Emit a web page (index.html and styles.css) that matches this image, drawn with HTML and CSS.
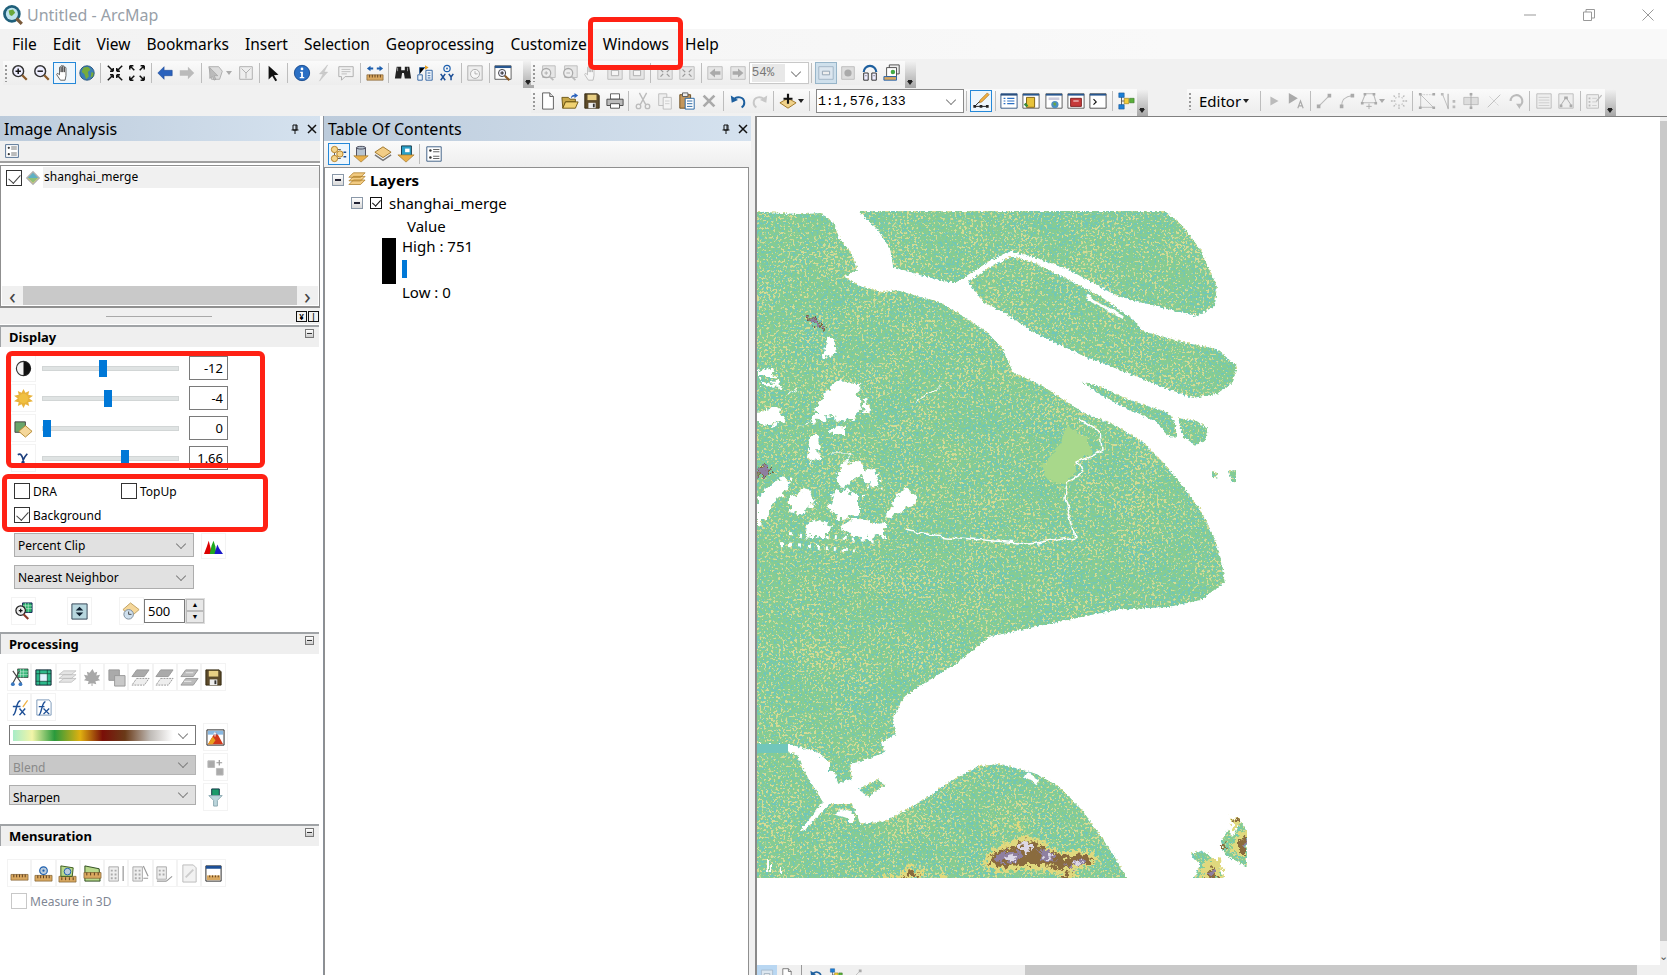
FILE: index.html
```html
<!DOCTYPE html>
<html lang="en">
<head>
<meta charset="utf-8">
<title>Untitled - ArcMap</title>
<link rel="stylesheet" href="styles.css">
</head>
<body>
<svg class="defs" width="0" height="0" aria-hidden="true">
<defs>
<symbol id="logo" viewBox="0 0 20 20"><circle cx="9" cy="9" r="8" fill="#1f5f7a"/><circle cx="9" cy="9" r="5.500" fill="#bfe3ee"/><path d="M6 6l4-1 2 3-3 3-2-1z" fill="#6aa83c"/><path d="M13 13l5 5" stroke="#7a5a3a" stroke-width="3"/></symbol>
<symbol id="zin" viewBox="0 0 20 20"><circle cx="8" cy="8" r="6" fill="#eef" stroke="#333" stroke-width="1.600"/><path d="M5 8h6M8 5v6" stroke="#111" stroke-width="1.600"/><path d="M12.500 12.500l5 5" stroke="#8a5a2a" stroke-width="2.600"/></symbol>
<symbol id="zout" viewBox="0 0 20 20"><circle cx="8" cy="8" r="6" fill="#eef" stroke="#333" stroke-width="1.600"/><path d="M5 8h6" stroke="#111" stroke-width="1.600"/><path d="M12.500 12.500l5 5" stroke="#8a5a2a" stroke-width="2.600"/></symbol>
<symbol id="hand" viewBox="0 0 20 20"><path d="M6 18l-4-6c-.6-1.200 1-2 1.800-1L5 12V4c0-1.200 1.800-1.200 1.800 0v5-6.500c0-1.200 1.800-1.200 1.800 0V9 3c0-1.200 1.800-1.200 1.800 0v6-4.500c0-1.200 1.800-1.200 1.800 0V13l-1 5z" fill="#fff" stroke="#444" stroke-width=".9"/></symbol>
<symbol id="globe" viewBox="0 0 20 20"><circle cx="10" cy="10" r="8" fill="#3c7fb8"/><path d="M6 4l5-1 3 3-3 3 1 5-3 3-2-6-3-2zM15 9l3 1-1 4-3 1z" fill="#77ab3c"/><circle cx="10" cy="10" r="8" fill="none" stroke="#24527a"/></symbol>
<symbol id="fin" viewBox="0 0 20 20"><path d="M2 2l5 5M8 8H4.500M8 8V4.500M18 2l-5 5M12 8h3.500M12 8V4.500M2 18l5-5M8 12H4.500M8 12v3.500M18 18l-5-5M12 12h3.500M12 12v3.500" stroke="#111" stroke-width="1.700" fill="none"/></symbol>
<symbol id="fout" viewBox="0 0 20 20"><path d="M7 7L2 2M2 2h4M2 2v4M13 7l5-5M18 2h-4M18 2v4M7 13l-5 5M2 18h4M2 18v-4M13 13l5 5M18 18h-4M18 18v-4" stroke="#111" stroke-width="1.700" fill="none"/></symbol>
<symbol id="back" viewBox="0 0 20 20"><path d="M2 10l7-7v4h9v6H9v4z" fill="#2a62bd" stroke="#1a4590" stroke-width=".6"/></symbol>
<symbol id="fwd" viewBox="0 0 20 20"><path d="M18 10l-7-7v4H2v6h9v4z" fill="#bbb"/></symbol>
<symbol id="sel" viewBox="0 0 20 20"><path d="M2 3h11l4 5-3 9H5z" fill="#ddd" stroke="#aaa"/><path d="M3 4l9 9-4 0 2 4-2 1-2-4-3 2z" fill="#bbb" stroke="#999" stroke-width=".6"/></symbol>
<symbol id="clr" viewBox="0 0 20 20"><path d="M3 3h14v14H3z" fill="#eee" stroke="#aaa"/><path d="M5 5l5 5 5-5M10 10v6" stroke="#aaa" fill="none"/></symbol>
<symbol id="ptr" viewBox="0 0 20 20"><path d="M4 2l11 10-5 .5 3.500 5.500-2 1.300-3.500-6-4 4z" fill="#111"/></symbol>
<symbol id="info" viewBox="0 0 20 20"><circle cx="10" cy="10" r="8.500" fill="#2a6fc4" stroke="#174a8c"/><circle cx="10" cy="5.500" r="1.500" fill="#fff"/><path d="M8 8.500h3v6h1.500v1.300h-5v-1.300H9V10H8z" fill="#fff"/></symbol>
<symbol id="bolt" viewBox="0 0 20 20"><path d="M14 1L5 11h4l-4 8 9-10h-4z" fill="#ccc" stroke="#bbb" stroke-width=".5"/></symbol>
<symbol id="note" viewBox="0 0 20 20"><path d="M2 3h16v11H9l-4 4v-4H2z" fill="#f2f2f2" stroke="#aaa"/><path d="M5 6h10M5 8.500h10M5 11h6" stroke="#bbb"/></symbol>
<symbol id="meas" viewBox="0 0 20 20"><path d="M1 12h18v6H1z" fill="#d9a860" stroke="#7a5a2a" stroke-width=".7"/><path d="M4 12v3M7 12v3M10 12v3M13 12v3M16 12v3" stroke="#5a3a1a"/><path d="M1 5l4-3v2h3v2H5v2zM19 5l-4-3v2h-3v2h3v2z" fill="#1d5fae"/></symbol>
<symbol id="bino" viewBox="0 0 20 20"><path d="M3 3h5v4h4V3h5l2 13h-7l-1-6H9l-1 6H1z" fill="#222"/><path d="M4 4v4M15 4v4" stroke="#999"/></symbol>
<symbol id="route" viewBox="0 0 20 20"><path d="M2 12h5v6H2zM11 7h7v11h-7z" fill="#eef4fb" stroke="#2a5f9e"/><path d="M4 11V4h6M13 10h3M13 13h3M13 15.500h3" stroke="#2a5f9e"/><path d="M10 1.500l4 2.500-4 2.500z" fill="#e8a020"/></symbol>
<symbol id="xy" viewBox="0 0 20 20"><circle cx="10" cy="5" r="3.500" fill="none" stroke="#1d5fae" stroke-width="1.300"/><circle cx="10" cy="5" r="1" fill="#1d5fae"/><path d="M3 11l5 7M8 11l-5 7M12 11l2.500 3.500L17 11M14.500 14.500V18" stroke="#1d4f96" stroke-width="1.700" fill="none"/></symbol>
<symbol id="time" viewBox="0 0 20 20"><path d="M2 2h16v16H2z" fill="#eee" stroke="#aaa"/><circle cx="10" cy="11" r="5" fill="#f7f7f7" stroke="#aaa"/><path d="M10 8v3h3" stroke="#aaa" fill="none"/></symbol>
<symbol id="view" viewBox="0 0 20 20"><path d="M1 2h18v15H1z" fill="#fff" stroke="#555"/><path d="M1 2h18v2.500H1z" fill="#27568f"/><circle cx="9" cy="10" r="4" fill="#eef" stroke="#333"/><path d="M7 10h4M9 8v4" stroke="#111"/><path d="M12 13l5 5" stroke="#8a5a2a" stroke-width="2.400"/></symbol>
<symbol id="gz1" viewBox="0 0 20 20"><path d="M4 2h14v13H4z" fill="#e6e6e6" stroke="#bbb"/><circle cx="8" cy="10" r="5" fill="#eee" stroke="#aaa" stroke-width="1.400"/><path d="M6 10h4M8 8v4" stroke="#aaa"/><path d="M12 14l4 4" stroke="#bbb" stroke-width="2"/></symbol>
<symbol id="gz2" viewBox="0 0 20 20"><path d="M4 2h14v13H4z" fill="#e6e6e6" stroke="#bbb"/><circle cx="8" cy="10" r="5" fill="#eee" stroke="#aaa" stroke-width="1.400"/><path d="M6 10h4" stroke="#aaa"/><path d="M12 14l4 4" stroke="#bbb" stroke-width="2"/></symbol>
<symbol id="gbox" viewBox="0 0 20 20"><path d="M2 3h16v14H2z" fill="#e6e6e6" stroke="#bbb"/><path d="M6 7h8v6H6z" fill="#f4f4f4" stroke="#aaa"/></symbol>
<symbol id="gboxs" viewBox="0 0 20 20"><path d="M2 3h16v14H2z" fill="#e6e6e6" stroke="#bbb"/><path d="M5 6l3 3M15 6l-3 3M5 14l3-3M15 14l-3-3" stroke="#999" stroke-width="1.400"/></symbol>
<symbol id="gleft" viewBox="0 0 20 20"><path d="M2 3h16v14H2z" fill="#e6e6e6" stroke="#bbb"/><path d="M4 10l6-5v3h6v4h-6v3z" fill="#aaa"/></symbol>
<symbol id="gright" viewBox="0 0 20 20"><path d="M2 3h16v14H2z" fill="#e6e6e6" stroke="#bbb"/><path d="M16 10l-6-5v3H4v4h6v3z" fill="#aaa"/></symbol>
<symbol id="page" viewBox="0 0 20 20"><path d="M2 3h16v14H2z" fill="#dce6ef" stroke="#9fb2c4"/><path d="M6 8h8v4H6z" fill="#eee" stroke="#8ea0b0"/></symbol>
<symbol id="gstar" viewBox="0 0 20 20"><path d="M3 3h14v14H3z" fill="#ddd" stroke="#bbb"/><circle cx="10" cy="10" r="4" fill="#aaa"/></symbol>
<symbol id="refr" viewBox="0 0 20 20"><path d="M3 9a7 7 0 0 1 14 0" stroke="#1d5f9e" stroke-width="2.400" fill="none"/><path d="M3 10h5v8H3zM12 10h5v8h-5z" fill="#eef" stroke="#222"/><path d="M5 13h1M14 13h1" stroke="#222"/></symbol>
<symbol id="wins" viewBox="0 0 20 20"><path d="M7 1h11v10H7z" fill="#eee" stroke="#444"/><path d="M4 4h11v10H4z" fill="#fff" stroke="#444"/><circle cx="11" cy="9" r="2.500" fill="#4a4"/><path d="M1 14h14v4H1z" fill="#d9a860" stroke="#1d5fae"/></symbol>
<symbol id="newd" viewBox="0 0 20 20"><path d="M4 1h8l4 4v14H4z" fill="#fff" stroke="#555"/><path d="M12 1v4h4" fill="#ddd" stroke="#555"/></symbol>
<symbol id="open" viewBox="0 0 20 20"><path d="M1 6h7l2 2h6v3H5l-3 7z" fill="#c9a94a" stroke="#6a5210"/><path d="M5 11h14l-3 7H2z" fill="#f0d272" stroke="#6a5210"/><path d="M11 7c0-3 2-4 4-4V1l4 3-4 3V5c-2 0-3 1-4 2z" fill="#2a62bd"/></symbol>
<symbol id="save" viewBox="0 0 20 20"><path d="M2 2h14l2 2v14H2z" fill="#5c4a2a" stroke="#33280f"/><path d="M5 3h10v6H5z" fill="#e8cf84"/><path d="M6 12h8v6H6z" fill="#eee"/><path d="M11 13h2v4h-2z" fill="#333"/></symbol>
<symbol id="prnt" viewBox="0 0 20 20"><path d="M5 2h10v6H5z" fill="#fff" stroke="#555"/><path d="M1 8h18v7H1z" fill="#bbb" stroke="#444"/><path d="M5 13h10v5H5z" fill="#fff" stroke="#444"/></symbol>
<symbol id="cut" viewBox="0 0 20 20"><path d="M6 1l7 13M14 1L7 14" stroke="#bbb" stroke-width="1.500"/><circle cx="5" cy="16" r="2.500" fill="none" stroke="#bbb" stroke-width="1.500"/><circle cx="15" cy="16" r="2.500" fill="none" stroke="#bbb" stroke-width="1.500"/></symbol>
<symbol id="copy" viewBox="0 0 20 20"><path d="M3 2h9v13H3z" fill="#eee" stroke="#bbb"/><path d="M8 6h9v13H8z" fill="#f4f4f4" stroke="#bbb"/><path d="M10 10h5M10 13h5" stroke="#ccc"/></symbol>
<symbol id="past" viewBox="0 0 20 20"><path d="M2 3h12v15H2z" fill="#c4975c" stroke="#6a4a1a"/><path d="M5 1h6v4H5z" fill="#eee" stroke="#555"/><path d="M8 7h10v12H8z" fill="#fff" stroke="#1d5f9e"/><path d="M10 10h6M10 13h6M10 16h6" stroke="#1d5f9e"/></symbol>
<symbol id="del" viewBox="0 0 20 20"><path d="M4 4l12 12M16 4L4 16" stroke="#aaa" stroke-width="3"/></symbol>
<symbol id="undo" viewBox="0 0 20 20"><path d="M5 9c3-5 12-4 12 3 0 2-1 4-3 5" fill="none" stroke="#1d5f9e" stroke-width="2.200"/><path d="M2 4l1 8 7-3z" fill="#1d5f9e"/></symbol>
<symbol id="redo" viewBox="0 0 20 20"><path d="M15 9c-3-5-12-4-12 3 0 2 1 4 3 5" fill="none" stroke="#c8c8c8" stroke-width="2.200"/><path d="M18 4l-1 8-7-3z" fill="#c8c8c8"/></symbol>
<symbol id="add" viewBox="0 0 20 20"><path d="M10 7l9 5-9 6-9-6z" fill="#f0d28a" stroke="#9a6f20"/><path d="M10 2v11M5 7.500h10" stroke="#111" stroke-width="2.400"/></symbol>
<symbol id="edit" viewBox="0 0 20 20"><path d="M3 16h14M3 16l7-7" stroke="#111"/><path d="M1.500 14.500h3v3h-3zM8.500 14.500h3v3h-3zM15.500 14.500h3v3h-3z" fill="#222"/><path d="M9 9l8-8 2 2-8 8-3 1z" fill="#f2b040" stroke="#8a5a1a" stroke-width=".6"/></symbol>
<symbol id="toc" viewBox="0 0 20 20"><path d="M1 2h18v16H1z" fill="#fff" stroke="#2a4f7f"/><path d="M1 2h18v2H1z" fill="#2a4f7f"/><path d="M4 7h2M8 7h8M4 10h2M8 10h8M4 13h2M8 13h8" stroke="#2a6fc4" stroke-width="1.300"/></symbol>
<symbol id="catl" viewBox="0 0 20 20"><path d="M1 2h18v16H1z" fill="#fff" stroke="#555"/><path d="M1 2h18v2H1z" fill="#27568f"/><path d="M5 6h9v11H5z" fill="#e8c33a" stroke="#7a5a0a"/><path d="M2 14l3 3 2-2-3-3z" fill="#3a8a3a"/></symbol>
<symbol id="srch" viewBox="0 0 20 20"><path d="M1 2h18v16H1z" fill="#fff" stroke="#555"/><path d="M1 2h18v2H1z" fill="#27568f"/><path d="M4 6h12v3H4z" fill="#ccd"/><circle cx="11" cy="14" r="4" fill="#4c8fc0"/><path d="M9 12h3v3h-2z" fill="#6aa83c"/></symbol>
<symbol id="tbox" viewBox="0 0 20 20"><path d="M1 2h18v16H1z" fill="#fff" stroke="#555"/><path d="M1 2h18v2H1z" fill="#27568f"/><path d="M4 7h12v9H4z" fill="#c63a3a" stroke="#7a1a1a"/><path d="M7 10h6" stroke="#fff"/></symbol>
<symbol id="pyth" viewBox="0 0 20 20"><path d="M1 2h18v16H1z" fill="#fff" stroke="#444"/><path d="M1 2h18v2H1z" fill="#27568f"/><path d="M5 8l3 3-3 3" stroke="#111" fill="none" stroke-width="1.300"/></symbol>
<symbol id="graph" viewBox="0 0 20 20"><path d="M5 5v10M5 10h6" stroke="#555"/><path d="M2 1h6v5H2zM2 14h6v5H2z" fill="#1d7fd6" stroke="#134f8c" stroke-width=".6"/><path d="M8 7h5v6H8z" fill="#f2cf3a" stroke="#8a6a0a" stroke-width=".6"/><path d="M14 7h5v5h-5z" fill="#5ab03a" stroke="#2a6a1a" stroke-width=".6"/></symbol>
<symbol id="e1" viewBox="0 0 20 20"><path d="M6 5l9 5-9 5z" fill="#bbb"/></symbol>
<symbol id="e2" viewBox="0 0 20 20"><path d="M2 1l10 6-10 6z" fill="#aaa"/><path d="M12 18l3-8 3 8M13 15.500h4" stroke="#aaa" fill="none" stroke-width="1.300"/></symbol>
<symbol id="e3" viewBox="0 0 20 20"><path d="M4 16L16 4" stroke="#bbb" stroke-width="1.200"/><path d="M2 14h4v4H2zM14 2h4v4h-4z" fill="#aaa"/></symbol>
<symbol id="e4" viewBox="0 0 20 20"><path d="M4 16C4 8 8 5 16 4" stroke="#bbb" fill="none" stroke-width="1.200"/><path d="M2 14h4v4H2zM14 2h4v4h-4z" fill="#aaa"/></symbol>
<symbol id="e5" viewBox="0 0 20 20"><path d="M6 2h9l3 10H2z" fill="none" stroke="#bbb" stroke-width="1.200"/><path d="M4 1h3v3H4zM14 1h3v3h-3zM1 11h3v3H1zM16 11h3v3h-3z" fill="#aaa"/><path d="M10 13v6M7 16h6" stroke="#aaa"/></symbol>
<symbol id="e6" viewBox="0 0 20 20"><path d="M10 1v5M10 14v5M1 10h5M14 10h5M4 4l3 3M16 4l-3 3M4 16l3-3M16 16l-3-3" stroke="#bbb" stroke-width="1.500" stroke-dasharray="2 1"/></symbol>
<symbol id="e7" viewBox="0 0 20 20"><path d="M3 3l14 14M3 3v14h14" stroke="#bbb" fill="none"/><path d="M3 3h14" stroke="#ccc" stroke-dasharray="2 1"/><path d="M1 1h3v3H1zM16 16h3v3h-3zM1 16h3v3H1zM16 1h3v3h-3z" fill="#aaa"/></symbol>
<symbol id="e8" viewBox="0 0 20 20"><path d="M3 3l6 15" stroke="#bbb" fill="none"/><path d="M9 2v17" stroke="#999"/><path d="M1 1h3v3H1zM14 9h3v3h-3zM14 15h3v3h-3z" fill="#bbb"/></symbol>
<symbol id="e9" viewBox="0 0 20 20"><path d="M2 6h16v8H2z" fill="#ddd" stroke="#bbb"/><path d="M10 1v18" stroke="#aaa"/><path d="M8.500 1h3v3h-3zM8.500 16h3v3h-3z" fill="#aaa"/></symbol>
<symbol id="e10" viewBox="0 0 20 20"><path d="M3 17L17 3" stroke="#bbb"/><path d="M5 5l10 10" stroke="#ccc" stroke-dasharray="2 1"/></symbol>
<symbol id="e11" viewBox="0 0 20 20"><path d="M4 10a6.500 6.500 0 1 1 9 6" fill="none" stroke="#bbb" stroke-width="2.400"/><path d="M10 13l6 0-2 6z" fill="#bbb"/></symbol>
<symbol id="e12" viewBox="0 0 20 20"><path d="M2 2h16v16H2z" fill="#eee" stroke="#bbb"/><path d="M4 6h12M4 9h12M4 12h12M4 15h12" stroke="#ccc"/></symbol>
<symbol id="e13" viewBox="0 0 20 20"><path d="M2 2h16v16H2z" fill="#eee" stroke="#bbb"/><path d="M4 15l6-9 6 9" stroke="#aaa" fill="none"/><path d="M8 5h4v3H8zM3 14h3v3H3zM14 14h3v3h-3z" fill="#aaa"/></symbol>
<symbol id="e14" viewBox="0 0 20 20"><path d="M2 3h13v15H2z" fill="#eee" stroke="#bbb"/><path d="M4 6h2v2H4zM4 10h2v2H4zM4 14h2v2H4z" fill="#bbb"/><path d="M8 7h5M8 11h5M8 15h5" stroke="#ccc"/><path d="M12 10l6-7 1 1-6 7z" fill="#bbb"/></symbol>
<symbol id="tree" viewBox="0 0 20 20"><path d="M8 5h4M8 15h4M5 8v4" stroke="#555"/><circle cx="5" cy="5" r="3.500" fill="#f5d58c" stroke="#b07a20"/><circle cx="5" cy="15" r="3.500" fill="#f5d58c" stroke="#b07a20"/><circle cx="11" cy="10" r="3.500" fill="#f5d58c" stroke="#b07a20"/><path d="M15 8h3M15 13h3" stroke="#1d4f96" stroke-width="1.500"/></symbol>
<symbol id="dbd" viewBox="0 0 20 20"><path d="M5 3c0-2 10-2 10 0v10H5z" fill="#b8c4d0" stroke="#445"/><path d="M5 3c0 2 10 2 10 0" fill="none" stroke="#445"/><path d="M2 12h16l-8 7z" fill="#eab04a" stroke="#9a6f20" stroke-width=".7"/></symbol>
<symbol id="lay" viewBox="0 0 20 20"><path d="M10 2l9 6-9 6-9-6z" fill="#f2cd86" stroke="#9a6f20"/><path d="M1 11l9 6 9-6" fill="none" stroke="#777" stroke-width="1.600"/></symbol>
<symbol id="lyd" viewBox="0 0 20 20"><path d="M5 1h11v11H5z" fill="#2aa0c8" stroke="#134"/><path d="M9 4h5v4H9z" fill="#fff"/><path d="M1 11h18l-9 8z" fill="#eab04a" stroke="#9a6f20" stroke-width=".7"/></symbol>
<symbol id="optn" viewBox="0 0 20 20"><path d="M2 2h16v16H2z" fill="#fff" stroke="#33577f"/><circle cx="6" cy="6" r="1.400" fill="#333"/><circle cx="6" cy="14" r="1.400" fill="#333"/><path d="M9 5h7M9 7.500h7M9 12.500h7M9 15h7" stroke="#555"/></symbol>
<symbol id="lyrs" viewBox="0 0 20 20"><path d="M6 2h13l-5 5H1zM6 6h13l-5 5H1zM6 10h13l-5 5H1z" fill="#f2cb82" stroke="#a87820" stroke-width=".8"/></symbol>
<symbol id="rast" viewBox="0 0 20 20"><path d="M10 1l9 9-9 9-9-9z" fill="#b0b0b0"/><path d="M10 3.500l6.500 6.500L10 16.500 3.500 10z" fill="#5fb0c4"/><path d="M3.500 10L10 16.500 16.500 10" fill="#8ec07a" stroke="#e9c878"/></symbol>
<symbol id="cntr" viewBox="0 0 20 20"><circle cx="10" cy="10" r="7.500" fill="#f4f4f4" stroke="#333" stroke-width="1.200"/><path d="M10 2.500a7.500 7.500 0 0 1 0 15z" fill="#111"/></symbol>
<symbol id="sun" viewBox="0 0 20 20"><path d="M10 0l2 4 4-2-1 4 5 1-4 3 4 3-5 1 1 4-4-2-2 4-2-4-4 2 1-4-5-1 4-3-4-3 5-1-1-4 4 2z" fill="#e8b23a"/><circle cx="10" cy="10" r="5" fill="#f0c040"/></symbol>
<symbol id="trans" viewBox="0 0 20 20"><path d="M1 3h11v11H1z" fill="#6aa56a" stroke="#444"/><path d="M12 7l7 6-7 6-7-6z" fill="#f5d79a" stroke="#b58a30"/></symbol>
<symbol id="hist" viewBox="0 0 20 20"><path d="M0 18l3-8 2-6 2 8 1 6z" fill="#d00"/><path d="M6 18l2-9 2-5 2 6 1 8z" fill="#1ea81e"/><path d="M11 18l3-10 2 4 4 6z" fill="#1a1ac8"/></symbol>
<symbol id="zgr" viewBox="0 0 20 20"><path d="M9 1h10v10H9z" fill="#29b36a" stroke="#125"/><path d="M12 1v10M15 1v10M9 4h10M9 7h10" stroke="#d7f5e5" stroke-width=".6"/><circle cx="7" cy="9" r="5" fill="#eee" stroke="#222" stroke-width="1.300"/><path d="M5 9h4M7 7v4" stroke="#111" stroke-width="1.300"/><path d="M10 13l5 5" stroke="#8a3a2a" stroke-width="2.200"/></symbol>
<symbol id="stretch" viewBox="0 0 20 20"><path d="M2 2h16v16H2z" fill="#b8d7df" stroke="#345"/><path d="M6 9h8l-4-4zM6 11h8l-4 4z" fill="#123"/></symbol>
<symbol id="clk" viewBox="0 0 20 20"><path d="M9 1l9 7-8 7-9-7z" fill="#f5d79a" stroke="#c0a060"/><circle cx="7" cy="13" r="5" fill="#cfe0ee" stroke="#7a8a9a"/><path d="M7 10v3h3" stroke="#444" fill="none"/></symbol>
<symbol id="gamma" viewBox="0 0 20 20"><path d="M4 6c3-2 5 1 6 7 1 3 0 5-1 5-1 0-1-3 1-7 1-2 2-4 4-6" fill="none" stroke="#1d3f7e" stroke-width="1.800"/></symbol>
<symbol id="clipg" viewBox="0 0 20 20"><path d="M8 1h11v9H8z" fill="#3bb87c" stroke="#111" stroke-width=".6"/><path d="M11 1v9M14 1v9M8 4h11M8 7h11" stroke="#cfeee0" stroke-width=".6"/><path d="M3 3l9 13M10 3l-7 13" stroke="#444" stroke-width="1.200"/><circle cx="3" cy="17" r="2" fill="#3a78c0"/><circle cx="11" cy="17" r="2" fill="#3a78c0"/></symbol>
<symbol id="mask" viewBox="0 0 20 20"><path d="M2 2h16v16H2z" fill="#2cb88a" stroke="#123"/><path d="M6 6h8v8H6z" fill="#e0f4ff"/><path d="M2 6h16M2 14h16M6 2v16M14 2v16" stroke="#0d3a2c" stroke-width=".7"/></symbol>
<symbol id="stack" viewBox="0 0 20 20"><path d="M6 3h13l-5 4H1zM6 7h13l-5 4H1zM6 11h13l-5 4H1z" fill="#e4e4e4" stroke="#bbb" stroke-width=".8"/></symbol>
<symbol id="leaf" viewBox="0 0 20 20"><path d="M10 1l2 4 3-1-1 4 4-1-2 4 2 2-5 1 1 3-4-1v3H9v-3l-4 1 1-3-5-1 2-2-2-4 4 1-1-4 3 1z" fill="#a8a8a8"/></symbol>
<symbol id="mos" viewBox="0 0 20 20"><path d="M2 2h11v11H2z" fill="#aaa" stroke="#999"/><path d="M8 8h11v11H8z" fill="#c8c8c8" stroke="#999"/></symbol>
<symbol id="dif1" viewBox="0 0 20 20"><path d="M6 2h13l-5 7H1z" fill="#aaa" stroke="#999"/><path d="M6 11h13l-5 7H1z" fill="#eee" stroke="#999" stroke-dasharray="2 1"/></symbol>
<symbol id="dif2" viewBox="0 0 20 20"><path d="M6 2h13l-5 7H1z" fill="#bbb" stroke="#999"/><path d="M6 11h13l-5 7H1z" fill="#bbb" stroke="#999"/><path d="M6 5h8M4 14h8" stroke="#eee"/></symbol>
<symbol id="fxe" viewBox="0 0 20 20"><path d="M3 18c4 0 3-15 8-15" fill="none" stroke="#1d4f96" stroke-width="1.600"/><path d="M3 9h8M10 11l6 7M16 11l-6 7" stroke="#1d4f96" stroke-width="1.500"/><path d="M13 9l5-7 1 1-5 7z" fill="#f0b040"/></symbol>
<symbol id="fxs" viewBox="0 0 20 20"><path d="M3 2h13l2 3v13H3z" fill="#fff" stroke="#7a98b8"/><path d="M5 18c3 0 3-14 7-14" fill="none" stroke="#1d4f96" stroke-width="1.500"/><path d="M5 9h6M10 11l6 6M16 11l-6 6" stroke="#1d4f96" stroke-width="1.400"/></symbol>
<symbol id="lut" viewBox="0 0 20 20"><path d="M1 2h18v16H1z" fill="#fff" stroke="#222"/><path d="M2 17l5-8 3-5 3 4 5 9z" fill="#d0381c"/><path d="M2 17l5-8 3 4-3 4z" fill="#e8a020"/><path d="M2 3h16v4H2z" fill="#3a8ad0" opacity=".6"/><path d="M9.500 4v5M8 6h3" stroke="#fff"/></symbol>
<symbol id="blnd" viewBox="0 0 20 20"><path d="M2 3h7v7H2zM11 11h7v7h-7z" fill="#aaa" stroke="#bbb"/><path d="M14 2v6M11 5h6" stroke="#999" stroke-width="1.300"/></symbol>
<symbol id="fun" viewBox="0 0 20 20"><path d="M6 1h8v7H6z" fill="#1b9a6a" stroke="#134"/><path d="M3 8h14l-5 5v6H8v-6z" fill="#bcd6dc" stroke="#8aa8b0"/></symbol>
<symbol id="m1" viewBox="0 0 20 20"><path d="M1 11h18v6H1z" fill="#d9a860" stroke="#7a5a2a" stroke-width=".7"/><path d="M4 11v3M7 11v3M10 11v3M13 11v3M16 11v3" stroke="#5a3a1a"/></symbol>
<symbol id="m2" viewBox="0 0 20 20"><path d="M1 12h18v6H1z" fill="#d9a860" stroke="#7a5a2a" stroke-width=".7"/><path d="M4 12v3M7 12v3M10 12v3M13 12v3M16 12v3" stroke="#5a3a1a"/><circle cx="10" cy="7" r="4" fill="#bcd" stroke="#1d5fae" stroke-width="1.200"/><circle cx="10" cy="7" r="1.200" fill="#1d5fae"/></symbol>
<symbol id="m3" viewBox="0 0 20 20"><path d="M1 13h18v6H1z" fill="#d9a860" stroke="#7a5a2a" stroke-width=".7"/><path d="M3 2l13 2-1 9H3z" fill="#b8d88a" stroke="#3a5a1a"/><circle cx="10" cy="8" r="3.500" fill="#bcd" stroke="#1d5fae"/><path d="M4 14v3M8 14v3M12 14v3M16 14v3" stroke="#5a3a1a"/></symbol>
<symbol id="m4" viewBox="0 0 20 20"><path d="M2 2l15 3 1 13H2z" fill="#b8d88a" stroke="#2a4a1a"/><path d="M1 9h18v6H1z" fill="#d9a860" stroke="#7a5a2a" stroke-width=".7"/><path d="M4 9v3M8 9v3M12 9v3M16 9v3" stroke="#5a3a1a"/></symbol>
<symbol id="m5" viewBox="0 0 20 20"><path d="M2 3h10v15H2z" fill="#eee" stroke="#aaa"/><path d="M4 6h2v2H4zM8 6h2v2H8zM4 10h2v2H4zM8 10h2v2H8zM4 14h2v2H4zM8 14h2v2H8z" fill="#aaa"/><path d="M17 2v16" stroke="#999" stroke-width="1.300"/></symbol>
<symbol id="m6" viewBox="0 0 20 20"><path d="M2 3h10v15H2z" fill="#eee" stroke="#aaa"/><path d="M4 6h2v2H4zM8 6h2v2H8zM4 10h2v2H4zM8 10h2v2H8zM4 14h2v2H4zM8 14h2v2H8z" fill="#aaa"/><path d="M13 2l5 11M13 15h5" stroke="#999" stroke-width="1.200"/></symbol>
<symbol id="m7" viewBox="0 0 20 20"><path d="M2 3h10v13H2z" fill="#eee" stroke="#aaa"/><path d="M4 6h2v2H4zM8 6h2v2H8zM4 10h2v2H4zM8 10h2v2H8z" fill="#aaa"/><path d="M12 18l6-5M2 18h10" stroke="#999" stroke-width="1.200"/></symbol>
<symbol id="m8" viewBox="0 0 20 20"><path d="M3 1h11l3 3v15H3z" fill="#f2f2f2" stroke="#bbb"/><path d="M6 14l8-8" stroke="#ccc" stroke-width="2"/></symbol>
<symbol id="m9" viewBox="0 0 20 20"><path d="M2 2h16v16H2z" fill="#fff" stroke="#222"/><path d="M2 2h16v3H2z" fill="#1d4f96"/><path d="M3 12h14v5H3z" fill="#d9a860"/><path d="M6 12v2M9 12v2M12 12v2M15 12v2" stroke="#5a3a1a"/></symbol>
<filter id="speckle" x="0" y="0" width="100%" height="100%" color-interpolation-filters="sRGB">
<feTurbulence type="fractalNoise" baseFrequency="0.42" numOctaves="2" seed="11" result="fine0"/>
<feColorMatrix in="fine0" type="matrix" values="1 0 0 0 0 0 1 0 0 0 0 0 1 0 0 0 0 0 0 1" result="fine"/>
<feTurbulence type="fractalNoise" baseFrequency="0.025" numOctaves="3" seed="23" result="coarse0"/>
<feColorMatrix in="coarse0" type="matrix" values="1 0 0 0 0 0 1 0 0 0 0 0 1 0 0 0 0 0 0 1" result="coarse"/>
<feComposite in="fine" in2="coarse" operator="arithmetic" k1="0" k2="0.95" k3="0.2" k4="-0.075" result="noise"/>
<feDisplacementMap in="SourceGraphic" in2="fine" scale="5" xChannelSelector="R" yChannelSelector="G" result="land"/>
<feColorMatrix in="noise" type="matrix" values="0 0 0 0 0.44 0 0 0 0 0.78 0 0 0 0 0.72 14 0 0 0 -7.4" result="teal"/>
<feColorMatrix in="noise" type="matrix" values="0 0 0 0 0.84 0 0 0 0 0.86 0 0 0 0 0.58 0 14 0 0 -8.1" result="yellow"/>
<feMerge result="merged"><feMergeNode in="land"/><feMergeNode in="teal"/><feMergeNode in="yellow"/></feMerge>
<feComposite in="merged" in2="land" operator="in"/>
</filter>
<filter id="jag" x="-10%" y="-10%" width="120%" height="120%" color-interpolation-filters="sRGB">
<feTurbulence type="fractalNoise" baseFrequency="0.22" numOctaves="3" seed="6" result="n"/>
<feDisplacementMap in="SourceGraphic" in2="n" scale="14" xChannelSelector="R" yChannelSelector="G"/>
</filter>
<filter id="lakejag" x="-5%" y="-5%" width="110%" height="110%">
<feTurbulence type="fractalNoise" baseFrequency="0.16" numOctaves="3" seed="3" result="n"/>
<feDisplacementMap in="SourceGraphic" in2="n" scale="12" xChannelSelector="R" yChannelSelector="G"/>
</filter>
<filter id="riverjag" x="-5%" y="-5%" width="110%" height="110%">
<feTurbulence type="fractalNoise" baseFrequency="0.09" numOctaves="2" seed="8" result="n"/>
<feDisplacementMap in="SourceGraphic" in2="n" scale="8" xChannelSelector="R" yChannelSelector="G"/>
</filter>
<clipPath id="mapclip"><rect x="757" y="212" width="490" height="667"/></clipPath>
</defs>
</svg>

<header class="title"><svg class="applogo"><use href="#logo"/></svg><span>Untitled - ArcMap</span>
<div class="caption"><svg class="capicon" viewBox="0 0 12 12"><path d="M0 6h12" stroke="#999"/></svg><svg class="capicon" viewBox="0 0 12 12"><path d="M.5 3h8v8.500h-8zM3 3V.5h8.500V9H9" fill="none" stroke="#999"/></svg><svg class="capicon" viewBox="0 0 12 12"><path d="M.5.5l11 11M11.500.5l-11 11" stroke="#999"/></svg></div></header>

<nav class="menubar"><span>File</span><span>Edit</span><span>View</span><span>Bookmarks</span><span>Insert</span><span>Selection</span><span>Geoprocessing</span><span>Customize</span><span>Windows</span><span>Help</span></nav>

<div class="toolrow">
<div class="tb tb-a"><i class="grip"></i>
<b class="b"><svg><use href="#zin"/></svg></b><b class="b"><svg><use href="#zout"/></svg></b><b class="b on"><svg><use href="#hand"/></svg></b><b class="b"><svg><use href="#globe"/></svg></b><i class="s"></i>
<b class="b"><svg><use href="#fin"/></svg></b><b class="b"><svg><use href="#fout"/></svg></b><i class="s"></i>
<b class="b"><svg><use href="#back"/></svg></b><b class="b"><svg><use href="#fwd"/></svg></b><i class="s"></i>
<b class="b w"><svg><use href="#sel"/></svg><em class="dn gray"></em></b><b class="b"><svg><use href="#clr"/></svg></b><i class="s"></i>
<b class="b"><svg><use href="#ptr"/></svg></b><i class="s"></i>
<b class="b"><svg><use href="#info"/></svg></b><b class="b"><svg><use href="#bolt"/></svg></b><b class="b"><svg><use href="#note"/></svg></b><i class="s"></i>
<b class="b"><svg><use href="#meas"/></svg></b><i class="s"></i>
<b class="b"><svg><use href="#bino"/></svg></b><b class="b"><svg><use href="#route"/></svg></b><b class="b"><svg><use href="#xy"/></svg></b><i class="s"></i>
<b class="b"><svg><use href="#time"/></svg></b><i class="s"></i>
<b class="b"><svg><use href="#view"/></svg></b><i class="more"></i></div>
<div class="tb tb-b"><i class="grip"></i>
<b class="b"><svg><use href="#gz1"/></svg></b><b class="b"><svg><use href="#gz2"/></svg></b><b class="b off"><svg><use href="#hand"/></svg></b><b class="b"><svg><use href="#gbox"/></svg></b><b class="b"><svg><use href="#gbox"/></svg></b><i class="s"></i>
<b class="b"><svg><use href="#gboxs"/></svg></b><b class="b"><svg><use href="#gboxs"/></svg></b><i class="s"></i>
<b class="b"><svg><use href="#gleft"/></svg></b><b class="b"><svg><use href="#gright"/></svg></b>
<div class="pct"><span>54%</span><em class="chev"></em></div><i class="s"></i>
<b class="b on2"><svg><use href="#page"/></svg></b><b class="b"><svg><use href="#gstar"/></svg></b><b class="b"><svg><use href="#refr"/></svg></b><b class="b"><svg><use href="#wins"/></svg></b><i class="more"></i></div>
</div>

<div class="toolrow second">
<div class="tb tb-c"><i class="grip"></i>
<b class="b"><svg><use href="#newd"/></svg></b><b class="b"><svg><use href="#open"/></svg></b><b class="b"><svg><use href="#save"/></svg></b><b class="b"><svg><use href="#prnt"/></svg></b><i class="s"></i>
<b class="b"><svg><use href="#cut"/></svg></b><b class="b"><svg><use href="#copy"/></svg></b><b class="b"><svg><use href="#past"/></svg></b><b class="b"><svg><use href="#del"/></svg></b><i class="s"></i>
<b class="b"><svg><use href="#undo"/></svg></b><b class="b"><svg><use href="#redo"/></svg></b><i class="s"></i>
<b class="b w"><svg><use href="#add"/></svg><em class="dn"></em></b><i class="s"></i>
<div class="scale"><span>1:1,576,133</span><em class="chev"></em></div><i class="s"></i>
<b class="b on"><svg><use href="#edit"/></svg></b><i class="s"></i><b class="b"><svg><use href="#toc"/></svg></b><b class="b"><svg><use href="#catl"/></svg></b><b class="b"><svg><use href="#srch"/></svg></b><b class="b"><svg><use href="#tbox"/></svg></b><b class="b"><svg><use href="#pyth"/></svg></b><i class="s"></i>
<b class="b"><svg><use href="#graph"/></svg></b><i class="more"></i></div>
<div class="tb tb-d"><i class="grip"></i><span class="editor">Editor<em class="dn"></em></span><i class="s"></i>
<b class="b"><svg><use href="#e1"/></svg></b><b class="b"><svg><use href="#e2"/></svg></b><i class="s"></i>
<b class="b"><svg><use href="#e3"/></svg></b><b class="b"><svg><use href="#e4"/></svg></b><b class="b w"><svg><use href="#e5"/></svg><em class="dn gray"></em></b><b class="b"><svg><use href="#e6"/></svg></b><i class="s"></i>
<b class="b"><svg><use href="#e7"/></svg></b><b class="b"><svg><use href="#e8"/></svg></b><b class="b"><svg><use href="#e9"/></svg></b><b class="b"><svg><use href="#e10"/></svg></b><b class="b"><svg><use href="#e11"/></svg></b><i class="s"></i>
<b class="b"><svg><use href="#e12"/></svg></b><b class="b"><svg><use href="#e13"/></svg></b><i class="s"></i>
<b class="b"><svg><use href="#e14"/></svg></b><i class="more"></i></div>
</div>

<main class="work">
<aside class="ia">
<div class="phead"><span>Image Analysis</span><svg class="pin" viewBox="0 0 10 10"><path d="M3 1h4v5H3zM1.500 6h7M5 6v4M6 1v5" stroke="#111" fill="none"/></svg><svg class="pin" viewBox="0 0 10 10"><path d="M1 1l8 8M9 1L1 9" stroke="#111" stroke-width="1.500"/></svg></div>
<div class="iabar"><svg class="i18"><use href="#optn"/></svg></div>
<div class="ialist">
<div class="iarow"><span class="cb chk"></span><svg class="i18 dia"><use href="#rast"/></svg><span class="ianame">shanghai_merge</span></div>
<div class="hscroll"><span class="arrow">‹</span><span class="thumb"></span><span class="arrow">›</span></div>
</div>
<div class="split"><i class="splitline"></i><span class="mini">¥</span><span class="mini">|</span></div>

<section class="sect"><h3>Display</h3><i class="collapse"></i></section>
<div class="disp">
<div class="srow"><span class="ibox"><svg><use href="#cntr"/></svg></span><div class="track"><i style="left:56px"></i></div><span class="val">-12</span></div>
<div class="srow"><span class="ibox"><svg><use href="#sun"/></svg></span><div class="track"><i style="left:61px"></i></div><span class="val">-4</span></div>
<div class="srow"><span class="ibox"><svg><use href="#trans"/></svg></span><div class="track"><i style="left:0"></i></div><span class="val">0</span></div>
<div class="srow"><span class="ibox"><svg><use href="#gamma"/></svg></span><div class="track"><i style="left:78px"></i></div><span class="val">1.66</span></div>
</div>
<div class="checks">
<label class="ck"><span class="cb"></span>DRA</label><label class="ck"><span class="cb"></span>TopUp</label>
<label class="ck"><span class="cb chk"></span>Background</label>
</div>
<div class="cmbrow"><div class="cmb"><span>Percent Clip</span><em class="chev"></em></div><span class="ibox"><svg><use href="#hist"/></svg></span></div>
<div class="cmbrow"><div class="cmb"><span>Nearest Neighbor</span><em class="chev"></em></div></div>
<div class="acts"><span class="ibox"><svg><use href="#zgr"/></svg></span><span class="ibox a2"><svg><use href="#stretch"/></svg></span><span class="ibox a3"><svg><use href="#clk"/></svg></span><div class="num">500</div><div class="spin"><em>▲</em><em>▼</em></div></div>

<section class="sect proc"><h3>Processing</h3><i class="collapse"></i></section>
<div class="icons"><span class="ibox"><svg><use href="#clipg"/></svg></span><span class="ibox"><svg><use href="#mask"/></svg></span><span class="ibox"><svg><use href="#stack"/></svg></span><span class="ibox"><svg><use href="#leaf"/></svg></span><span class="ibox"><svg><use href="#mos"/></svg></span><span class="ibox"><svg><use href="#dif1"/></svg></span><span class="ibox"><svg><use href="#dif1"/></svg></span><span class="ibox"><svg><use href="#dif2"/></svg></span><span class="ibox"><svg><use href="#save"/></svg></span></div>
<div class="icons"><span class="ibox"><svg><use href="#fxe"/></svg></span><span class="ibox"><svg><use href="#fxs"/></svg></span></div>
<div class="pcmb"><div class="cmb ramp"><i class="rampbar"></i><em class="chev"></em></div><span class="ibox"><svg><use href="#lut"/></svg></span></div>
<div class="pcmb"><div class="cmb dis"><span>Blend</span><em class="chev"></em></div><span class="ibox"><svg><use href="#blnd"/></svg></span></div>
<div class="pcmb"><div class="cmb"><span>Sharpen</span><em class="chev"></em></div><span class="ibox"><svg><use href="#fun"/></svg></span></div>

<section class="sect mens"><h3>Mensuration</h3><i class="collapse"></i></section>
<div class="icons"><span class="ibox"><svg><use href="#m1"/></svg></span><span class="ibox"><svg><use href="#m2"/></svg></span><span class="ibox"><svg><use href="#m3"/></svg></span><span class="ibox"><svg><use href="#m4"/></svg></span><span class="ibox"><svg><use href="#m5"/></svg></span><span class="ibox"><svg><use href="#m6"/></svg></span><span class="ibox"><svg><use href="#m7"/></svg></span><span class="ibox"><svg><use href="#m8"/></svg></span><span class="ibox"><svg><use href="#m9"/></svg></span></div>
<label class="ck m3d"><span class="cb dim"></span>Measure in 3D</label>
</aside>

<aside class="tocp">
<div class="phead"><span>Table Of Contents</span><svg class="pin" viewBox="0 0 10 10"><path d="M3 1h4v5H3zM1.500 6h7M5 6v4M6 1v5" stroke="#111" fill="none"/></svg><svg class="pin" viewBox="0 0 10 10"><path d="M1 1l8 8M9 1L1 9" stroke="#111" stroke-width="1.500"/></svg></div>
<div class="tocbar"><b class="b on"><svg><use href="#tree"/></svg></b><b class="b"><svg><use href="#dbd"/></svg></b><b class="b"><svg><use href="#lay"/></svg></b><b class="b"><svg><use href="#lyd"/></svg></b><i class="s"></i><b class="b"><svg><use href="#optn"/></svg></b></div>
<div class="tree">
<div class="node n1"><i class="tog"></i><svg class="i18"><use href="#lyrs"/></svg><strong>Layers</strong></div>
<div class="node n2"><i class="tog"></i><span class="cb2"></span><span>shanghai_merge</span></div>
<div class="legend">
<div class="lgval">Value</div>
<div class="lgbody"><i class="ramp-black"></i><div class="lgtext"><div>High : 751</div><i class="blue"></i><div>Low : 0</div></div></div>
</div>
</div>
</aside>

<section class="map">
<div class="mapmain">
<svg class="land" viewBox="757 118 903 848" preserveAspectRatio="none">
<g clip-path="url(#mapclip)">
<g filter="url(#speckle)" fill="#86cc92">
<path d="M750 212L800 215 820 214 833 223 840 240 850 252 858 270 845 278 860 287 883 293 897 291 917 297 940 303 963 317 987 333 1003 350 1013 373 1043 387 1067 403 1083 413 1117 427 1143 443 1163 463 1183 487 1200 510 1215 540 1222 563 1225 583 1201 601 1169 608 1116 611 1063 622 989 638 957 664 914 691 903 700 893 720 896 735 882 743 885 753 861 763 847 765 847 773 829 773 829 763 817 753 788 745 750 745z"/>
<path d="M750 753H788L797 755 803 770 823 803 800 832 805 831 829 805H852L861 825 885 822 920 803 949 783 978 767 1001 765 1037 775 1060 788 1083 812 1098 833 1113 855 1130 885H750z"/>
<path d="M858 212H1165L1183 227 1200 250 1217 287 1215 307 1197 317 1167 310 1117 297 1067 270 1030 257 1010 252 990 262 957 283 947 283 917 275 893 268 890 250 877 230z"/>
<path d="M968 283L990 268 1012 257 1033 263 1067 280 1100 297 1133 320 1143 332 1183 343 1217 350 1237 367 1233 383 1217 395 1193 399 1167 390 1117 370 1083 357 1033 333 1003 313 983 303z"/>
<path d="M1080 382L1103 388 1127 400 1167 413 1175 423 1177 438 1167 437 1157 423 1127 410 1103 397z"/>
<path d="M1178 419L1197 422 1208 430 1205 442 1195 446 1183 438z"/>
<path d="M1212 472L1218 474 1216 480 1212 478zM1229 472L1236 471 1236 484 1231 482zM1221 843L1228 830 1232 838 1240 822 1247 830V868L1236 862 1225 856zM1190 854L1203 852 1216 862 1224 882H1192L1200 866z"/>
<path d="M833 768L850 764 852 780 838 784zM858 790L878 780 885 786 868 798z"/>
</g>
<path fill="#a8d88b" filter="url(#lakejag)" d="M1068 425L1087 440 1090 455 1078 463 1072 480 1060 488 1050 482 1042 470 1050 455 1060 445z"/>
<rect x="757" y="745" width="31" height="9" fill="#71c6bb"/>
<g fill="#fff" filter="url(#lakejag)">
<path d="M821 357L828 340 834 340 836 354 830 359zM757 373L770 368 775 378 757 378zM760 382L780 383 781 388 762 387zM810 423L826 392 838 382 858 384 860 415 846 422 832 418 800 427zM867 400L870 413 862 413 864 402zM757 413L778 410 785 420 770 428 757 424zM830 430L845 428 845 434 832 434zM810 437H818L820 460 808 462zM843 465L855 462 870 472 855 480 843 490 835 478zM757 528V500L780 480 792 482 785 495 770 505 770 515zM883 520L905 487 918 502 900 515zM790 495L810 490 815 505 800 515 790 512zM835 490L860 495 860 515 840 520 828 510zM850 520L885 525 885 536 860 540 840 532zM810 520L830 525 828 537 806 537zM862 470L880 475 878 490 865 485z"/>
</g>
<g fill="none" stroke="#fff" filter="url(#riverjag)">
<path d="M1080 420L1100 433 1102 452 1078 464 1082 475 1067 483 1065 500 1075 537 1030 545 936 537 905 530" stroke-width="1.500"/>
<path d="M830 454h20l-3 6-6 5M788 395l8-6M915 403l25-15" stroke-width="1"/>
<path d="M790 535l90 8M780 545l80 6" stroke-width="4" stroke-dasharray="3 6"/>
<path d="M768 860v12M772 865v8M782 868v8" stroke-width="2"/>
<path d="M1085 297l40 22" stroke-width="3"/>
<path d="M838 812l12 4M850 815v8" stroke-width="6"/>
<path d="M1025 775l14 8" stroke-width="5"/>
</g>
<g filter="url(#jag)">
<path fill="#e0d97e" d="M982 866L990 852 1004 844 1025 836 1042 842 1058 852 1088 852 1102 862 1085 868 1060 874 1020 870 1000 874zM898 880L908 866 925 872 918 880zM936 880L942 872 950 880zM1198 880L1208 858 1220 862 1222 880zM1230 848L1238 836 1247 830V858L1240 858zM1230 825L1235 816 1240 826 1235 832zM1058 880L1064 870 1078 874 1078 880zM1012 830l6-10 6 12zM885 880l5-6 6 6zM990 830l4-5 4 6z"/>
<path fill="#8a6b3e" d="M988 864L996 852 1010 850 1020 842 1038 844 1050 852 1062 858 1085 856 1096 862 1080 866 1062 870 1042 866 1020 866 1000 868zM1062 880L1068 872 1074 880zM904 878L910 870 920 874 916 878zM1206 880L1212 866 1218 880zM1240 855L1240 840 1247 836V855zM1220 850L1224 844 1228 850zM1233 824L1235 818 1238 824z"/>
<path fill="#8e7fa0" d="M995 862L1002 852 1016 852 1024 858 1014 864zM1038 852L1048 850 1056 860 1044 862zM1066 866L1082 860 1086 864 1072 868zM1210 876L1214 868 1217 876zM1243 846L1247 840V850z"/>
<path fill="#ddd8e6" d="M1018 846L1028 842 1034 848 1028 854 1020 852zM1004 858L1016 856 1014 862 1006 862zM1047 854L1054 856 1050 860 1045 859zM1072 864L1080 861 1082 864 1074 867z"/>
</g>
<g filter="url(#jag)">
<path fill="#8e7fa0" stroke="#7c5a30" d="M807 319L813 319 824 328 818 329zM757 470L768 467 772 471 762 477 757 477z"/>
</g>
</g>
</svg>
<div class="vscroll"><i class="vthumb"></i><span class="varrow">⌄</span></div>
</div>
<div class="status">
<b class="sb on3"><svg><use href="#page"/></svg></b><b class="sb"><svg><use href="#newd"/></svg></b><i class="sbsep"></i><b class="sb"><svg><use href="#undo"/></svg></b><b class="sb"><svg><use href="#graph"/></svg></b><b class="sb"><svg><use href="#e3"/></svg></b>
<i class="hthumb"></i>
</div>
</section>

<div class="mark m-win"></div>
<div class="mark m-slide"></div>
<div class="mark m-check"></div>
</main>
</body>
</html>
```

FILE: styles.css
```css
* { box-sizing: border-box; }
html, body { margin: 0; padding: 0; }
body {
  width: 1667px; height: 975px; overflow: hidden; position: relative;
  background: #f0f0f0; color: #000;
  font-family: "Noto Sans", "Open Sans", sans-serif; font-size: 13px;
}
.defs { position: absolute; }
.title { height: 29px; background: #fff; display: flex; align-items: center; padding-left: 2px; color: #98a0a8; font-size: 16px; }
.applogo { width: 22px; height: 22px; margin-right: 3px; }
.caption { margin-left: auto; display: flex; gap: 47px; padding-right: 13px; }
.capicon { width: 12px; height: 12px; }
.menubar { height: 30px; background: linear-gradient(90deg, #f2f2f2, #f9f9f9 70%); display: flex; align-items: center; padding: 2px 0 0 4px; font-size: 15.500px; }
.menubar span { padding: 0 8px 2px; white-space: nowrap; }

.toolrow { height: 28px; display: flex; align-items: flex-start; padding-top: 2px; background: #f1f1f1; }
.second { height: 29px; }
.tb { display: flex; align-items: center; height: 24px; background: linear-gradient(#fafafa, #ededed); position: relative; }
.tb-a { margin-left: 3px; width: 525px; }
.tb-b { margin-left: 3px; width: 379px; }
.tb-c { margin-left: 531px; width: 611px; }
.tb-d { margin-left: 45px; width: 423px; }
.grip { width: 6px; height: 18px; background: radial-gradient(circle, #999 1px, transparent 1.300px) 0 0 / 6px 4px; flex: none; }
.b { width: 22.200px; height: 22px; flex: none; display: flex; align-items: center; justify-content: center; }
.b svg { width: 18px; height: 18px; }
.b.w { width: 30px; justify-content: flex-start; padding-left: 2px; gap: 1px; }
.on { background: #eef6fc; outline: 1.500px solid #2588d8; outline-offset: -1px; }
.on2 { background: #cfe0ec; outline: 1px solid #97b5c9; outline-offset: -1px; }
.off svg { opacity: .35; }
.s { width: 6px; height: 20px; flex: none; background: linear-gradient(#bdbdbd, #bdbdbd) center / 1px 100% no-repeat; }
.dn { display: inline-block; border: 3px solid transparent; border-top: 4px solid #222; border-bottom: 0; }
.dn.gray { border-top-color: #aaa; }
.more { position: absolute; right: -6px; top: 0; bottom: -3px; width: 11px; background: linear-gradient(#f2f2f2, #a7a7a7); }
.more::after { content: ""; position: absolute; left: 2px; bottom: 3px; border: 3px solid transparent; border-top: 4px solid #222; border-bottom: 0; box-shadow: 0 -2px 0 -1px #222; }
.chev { flex: none; width: 8px; height: 8px; border: solid #777; border-width: 0 1px 1px 0; transform: rotate(45deg) scale(.9); margin: 0 8px 2px auto; display: block; }
.pct { width: 60px; height: 22px; flex: none; display: flex; align-items: center; border: 1px solid #c8c8c8; background: #fff; color: #777; font-family: "Liberation Mono", monospace; font-size: 12.500px; }
.pct span { background: #e8e8e8; height: 18px; width: 33px; margin-left: 2px; line-height: 18px; }
.scale { width: 148px; height: 24px; margin-left: 3px; flex: none; display: flex; align-items: center; border: 1px solid #8a8a8a; background: #fff; font-family: "Liberation Mono", monospace; font-size: 13.300px; padding-left: 1px; white-space: nowrap; }
.editor { padding: 0 2px 0 6px; font-size: 15px; display: flex; align-items: center; gap: 2px; width: 64px; flex: none; }

.work { display: flex; height: 859px; position: relative; align-items: stretch; }
.ia { width: 324px; flex: none; background: #fff; border-right: 1px solid #8a9099; }
.phead { height: 25px; background: linear-gradient(90deg, #bccbdb, #d5e2ef); display: flex; align-items: center; padding-left: 4px; font-size: 16px; gap: 6px; }
.ia .phead { width: 320px; }
.phead span { flex: 1; }
.pin { width: 10px; height: 10px; margin-right: 1px; }
.pin:last-child { margin-right: 3px; }
.iabar { width: 320px; height: 22px; background: #f0f0f0; border-bottom: 2px solid #a0a0a0; padding: 2px 0 0 4px; }
.i18 { width: 16px; height: 16px; display: block; flex: none; }
.ialist { width: 320px; height: 143px; margin-top: 2px; border: 1px solid #8f8f8f; border-width: 1px 1.500px 2px 1px; background: #fff; display: flex; flex-direction: column; }
.iarow { display: flex; align-items: center; height: 21px; margin-top: 1px; padding-left: 5px; }
.dia { margin-left: 3px; }
.ianame { flex: 1; background: #f0f0f0; height: 21px; line-height: 20px; margin-left: 2px; padding-left: 1px; font-size: 12px; }
.cb { width: 16px; height: 16px; flex: none; border: 1px solid #333; background: #fff; position: relative; display: block; }
.cb.chk::after { content: ""; position: absolute; left: 4px; top: 1px; width: 6px; height: 10px; border: solid #444; border-width: 0 1.300px 1.300px 0; transform: rotate(42deg); }
.cb.dim { border-color: #c8c8c8; }
.hscroll { margin-top: auto; margin-bottom: 1px; height: 19px; display: flex; align-items: center; background: #f0f0f0; margin-left: 1px; margin-right: 1px; }
.arrow { width: 21px; text-align: center; font-size: 22px; line-height: 17px; color: #444; flex: none; }
.thumb { flex: 1; height: 100%; background: #c9c9c9; }
.split { width: 320px; height: 16px; background: #f0f0f0; position: relative; display: flex; justify-content: flex-end; align-items: center; gap: 1px; padding-right: 1px; }
.splitline { position: absolute; left: 106px; width: 106px; top: 8px; height: 1px; background: #a9a9a9; }
.mini { width: 11px; height: 11px; border: 1px solid #111; font-size: 8px; line-height: 9px; text-align: center; font-weight: 700; }

.sect { width: 319px; height: 22px; background: #efefef; border-top: 2px solid #a0a3a6; border-left: 1px solid #a0a3a6; margin-top: 1px; display: flex; align-items: center; padding-left: 8px; position: relative; }
.sect h3 { margin: 0; font-size: 13px; font-weight: 700; line-height: 18px; }
.collapse { position: absolute; right: 5px; top: 2px; width: 9px; height: 9px; border: 1px solid #777; background: linear-gradient(#fff, #ccc); }
.collapse::after { content: ""; position: absolute; left: 1px; right: 1px; top: 3px; height: 1px; background: #333; }
.ibox { width: 25px; height: 28px; flex: none; border: 1px solid #f3f3f3; display: flex; align-items: center; justify-content: center; background: #fff; }
.ibox svg { width: 19px; height: 19px; }

.disp { padding: 7px 0 0 11px; height: 128px; overflow: hidden; display: flex; flex-direction: column; gap: 2px; }
.srow { display: flex; height: 28px; align-items: center; flex: none; }
.track { width: 137px; height: 5px; background: #dfe3e3; border: 1px solid #d2d6d6; margin-left: 6px; position: relative; }
.track i { position: absolute; top: -7px; width: 8px; height: 17px; background: #0078d7; }
.val { width: 39px; height: 24px; border: 1px solid #7a7a7a; margin-left: 10px; text-align: right; padding-right: 4px; line-height: 23px; font-size: 13px; }
.checks { padding: 8px 0 0 14px; display: grid; grid-template-columns: 107px 1fr; grid-auto-rows: 16px; align-content: start; row-gap: 8px; height: 58px; }
.ck { display: flex; align-items: center; gap: 3px; font-size: 12px; height: 16px; }
.cmbrow { display: flex; padding-left: 14px; gap: 7px; height: 32px; }
.cmbrow .ibox { height: 26px; }
.cmb { width: 180px; height: 24px; flex: none; display: flex; align-items: center; background: #e1e1e1; border: 1px solid #adadad; padding-left: 3px; font-size: 12px; overflow: hidden; }
.acts { display: flex; padding-left: 11px; align-items: center; height: 28px; }
.a2 { margin-left: 31px; }
.a3 { margin-left: 27px; }
.num { width: 41px; height: 24px; border: 1px solid #7a7a7a; line-height: 22px; padding-left: 3px; }
.spin { width: 20px; height: 26px; border: 1px solid #ddd; display: flex; flex-direction: column; }
.spin em { flex: 1; background: #e8e8e8; border: 1px solid #bbb; font-style: normal; font-size: 7px; line-height: 10px; text-align: center; }
.proc { margin-top: 7px; }
.icons { display: flex; padding-left: 7px; height: 30px; }
.sect + .icons { margin-top: 9px; }
.icons .ibox { width: 24.300px; }
.pcmb { display: flex; padding-left: 9px; height: 30px; gap: 7px; align-items: flex-start; }
.pcmb .cmb { width: 187px; height: 20px; margin-top: 2px; align-items: flex-start; padding-top: 3px; }
.pcmb .chev { margin-top: 0; }
.ramp { background: #fff !important; border: 1.500px solid #777 !important; padding-top: 0 !important; align-items: center !important; }
.rampbar { width: 160px; height: 11px; margin-top: 0; flex: none; background: linear-gradient(90deg, #a8ecc8, #f2f5a8 12%, #2a9a3c 26%, #e0b010 42%, #7a0f08 56%, #6a3a18 70%, #c0bcb8 86%, #fff); }
.dis { background: #c8c8c8 !important; color: #8a8a8a; border-color: #b3b3b3 !important; }
.mens { margin-top: 11px; }
.sect.mens + .icons { margin-top: 13px; }
.m3d { margin: 4px 0 0 11px; color: #7f8794; }

.tocp { width: 427px; flex: none; }
.tocbar { height: 26px; display: flex; align-items: center; padding-left: 4px; background: linear-gradient(#fafafa, #eee); }
.tree { height: 808px; border: 1px solid #8f8f8f; border-bottom: 0; background: #fff; width: 425px; padding-top: 0; }
.node { display: flex; align-items: center; height: 23px; font-size: 15px; }
.n1 { padding-left: 7px; gap: 4px; height: 24px; }
.n2 { padding-left: 26px; gap: 7px; height: 22px; }
.tog { width: 12px; height: 12px; border: 1px solid #8a98a8; background: linear-gradient(#fff, #d8d8d8); position: relative; flex: none; }
.tog::after { content: ""; position: absolute; left: 2px; right: 2px; top: 4px; height: 1.500px; background: #223; }
.n1 .i18 { width: 18px; height: 18px; margin-right: 0; }
.cb2 { width: 12px; height: 12px; border: 1.500px solid #111; flex: none; position: relative; }
.cb2::after { content: ""; position: absolute; left: 2.500px; top: 0; width: 4px; height: 7px; border: solid #111; border-width: 0 1.500px 1.500px 0; transform: rotate(42deg); }
.legend { font-size: 15px; padding-left: 57px; }
.lgval { padding-left: 25px; line-height: 20px; margin-top: 2px; }
.lgbody { display: flex; gap: 6px; }
.ramp-black { width: 14px; height: 46px; background: #000; margin-top: 2px; flex: none; }
.lgtext { line-height: 21px; margin-top: 0; }
.blue { display: block; width: 5px; height: 18px; background: #0078d7; margin: 3px 0 4px; }

.map { margin-left: 4px; flex: 1; min-width: 0; border-left: 2px solid #8a8a8a; border-top: 1.500px solid #808080; display: flex; flex-direction: column; }
.mapmain { flex: 1; min-height: 0; display: flex; background: #fff; }
.land { width: 903px; height: 100%; display: block; flex: none; }
.vscroll { width: 7px; flex: none; background: #f0f0f0; position: relative; }
.vthumb { position: absolute; top: 4px; left: 0; right: 0; bottom: 24px; background: #c9c9c9; }
.varrow { position: absolute; bottom: 2px; left: -1px; font-size: 11px; color: #555; }
.status { height: 10px; display: flex; align-items: flex-start; background: #f0f0f0; overflow: hidden; position: relative; }
.sb { width: 20px; height: 20px; display: flex; justify-content: center; align-items: center; flex: none; }
.sb svg { width: 14px; height: 14px; }
.on3 { background: #b9d7f2; }
.sbsep { width: 9px; height: 10px; background: linear-gradient(#999, #999) center / 1px 100% no-repeat; flex: none; }
.hthumb { position: absolute; left: 268px; right: 30px; top: 0; height: 10px; background: #c9c9c9; }

.mark { position: absolute; border: 5px solid #ff2114; border-radius: 6px; pointer-events: none; }
.m-win { left: 588px; top: -99px; width: 95px; height: 53px; }
.m-slide { left: 6px; top: 235px; width: 259px; height: 117px; }
.m-check { left: 2px; top: 358px; width: 266px; height: 58px; }
```
